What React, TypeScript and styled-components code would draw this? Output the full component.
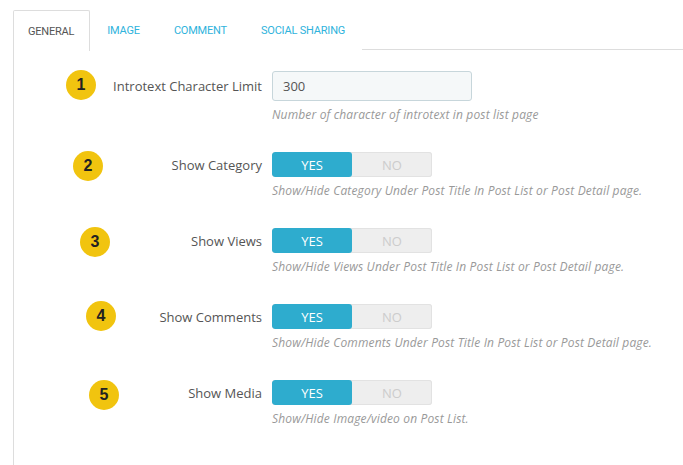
import React from "react";
import styled, { createGlobalStyle } from "styled-components";

const Global = createGlobalStyle`
  html, body { margin: 0; padding: 0; background: #fff; }
  body { font-family: "Open Sans", "Liberation Sans", sans-serif; color: #555; }
  * { box-sizing: border-box; }
`;

const Page = styled.div`
  padding: 10px 0 0 13px;
  height: 465px;
  display: flex;
  flex-direction: column;
  overflow: hidden;
`;

const TabBar = styled.div`
  display: flex;
  height: 40px;
  border-bottom: 1px solid #dddddd;
`;

const Tab = styled.div<{ $active?: boolean }>`
  display: flex;
  align-items: center;
  height: ${(p) => (p.$active ? "41px" : "40px")};
  padding: ${(p) => (p.$active ? "1px 15px 0 14px" : "1px 17px 0")};
  font-family: "Roboto", "Liberation Sans", sans-serif;
  font-size: 11px;
  letter-spacing: -0.2px;
  text-transform: uppercase;
  color: ${(p) => (p.$active ? "#555555" : "#2fb3dc")};
  background: #fff;
  border: ${(p) => (p.$active ? "1px solid #dddddd" : "none")};
  border-bottom: none;
  border-radius: 2px 2px 0 0;
  position: relative;
  z-index: 1;
`;

const Panel = styled.div`
  flex: 1;
  border-left: 1px solid #dddddd;
  padding-top: 21px;
`;

const Row = styled.div`
  display: grid;
  grid-template-columns: 258px 1fr;
  margin-bottom: 28px;
`;

const LabelCell = styled.div<{ $h: number }>`
  display: flex;
  align-items: center;
  height: ${(p) => p.$h}px;
  padding-right: 10px;
`;

const Badge = styled.div<{ $x: number; $y: number }>`
  width: 30px;
  height: 30px;
  flex: none;
  border-radius: 50%;
  background: #f1c40f;
  color: #222;
  font-family: "Liberation Sans", Arial, sans-serif;
  font-weight: bold;
  font-size: 16px;
  display: flex;
  align-items: center;
  justify-content: center;
  margin-left: ${(p) => p.$x}px;
  position: relative;
  top: ${(p) => p.$y}px;
`;

const Label = styled.label`
  margin-left: auto;
  font-size: 13px;
  color: #555;
  white-space: nowrap;
`;

const Control = styled.div`
  display: flex;
  flex-direction: column;
  align-items: flex-start;
`;

const TextInput = styled.div`
  width: 200px;
  height: 30px;
  background: #f5f8f9;
  border: 1px solid #c7d6db;
  border-radius: 3px;
  display: flex;
  align-items: center;
  padding-left: 10px;
  font-size: 13px;
  color: #555;
`;

const Switch = styled.div`
  display: flex;
  width: 160px;
  height: 25px;
  border-radius: 3px;
  background: #eeeeee;
  box-shadow: inset 0 0 0 1px #e2e2e2;
  overflow: hidden;
`;

const SwitchOpt = styled.div<{ $on?: boolean }>`
  flex: 1;
  display: flex;
  align-items: center;
  justify-content: center;
  font-size: 13px;
  color: ${(p) => (p.$on ? "#ffffff" : "#cccccc")};
  background: ${(p) => (p.$on ? "#2eacce" : "transparent")};
  border-radius: 3px;
`;

const Help = styled.p`
  margin: 5px 0 0;
  font-size: 12px;
  letter-spacing: 0.15px;
  line-height: 18px;
  font-style: italic;
  color: #999999;
  white-space: nowrap;
`;

type Item = {
  n: number;
  label: string;
  help: string;
  x: number;
  y: number;
  input?: boolean;
};

const items: Item[] = [
  { n: 1, label: "Introtext Character Limit", help: "Number of character of introtext in post list page", x: 52, y: -1, input: true },
  { n: 2, label: "Show Category", help: "Show/Hide Category Under Post Title In Post List or Post Detail page.", x: 59, y: 1 },
  { n: 3, label: "Show Views", help: "Show/Hide Views Under Post Title In Post List or Post Detail page.", x: 66, y: 1 },
  { n: 4, label: "Show Comments", help: "Show/Hide Comments Under Post Title In Post List or Post Detail page.", x: 72, y: -1 },
  { n: 5, label: "Show Media", help: "Show/Hide Image/video on Post List.", x: 75, y: 2 },
];

export default function App() {
  return (
    <>
      <Global />
      <Page>
        <TabBar>
          <Tab $active>General</Tab>
          <Tab>Image</Tab>
          <Tab>Comment</Tab>
          <Tab>Social Sharing</Tab>
        </TabBar>
        <Panel>
          {items.map((it) => (
            <Row key={it.n}>
              <LabelCell $h={it.input ? 30 : 25}>
                <Badge $x={it.x} $y={it.y}>{it.n}</Badge>
                <Label>{it.label}</Label>
              </LabelCell>
              <Control>
                {it.input ? (
                  <TextInput>300</TextInput>
                ) : (
                  <Switch>
                    <SwitchOpt $on>YES</SwitchOpt>
                    <SwitchOpt>NO</SwitchOpt>
                  </Switch>
                )}
                <Help>{it.help}</Help>
              </Control>
            </Row>
          ))}
        </Panel>
      </Page>
    </>
  );
}
